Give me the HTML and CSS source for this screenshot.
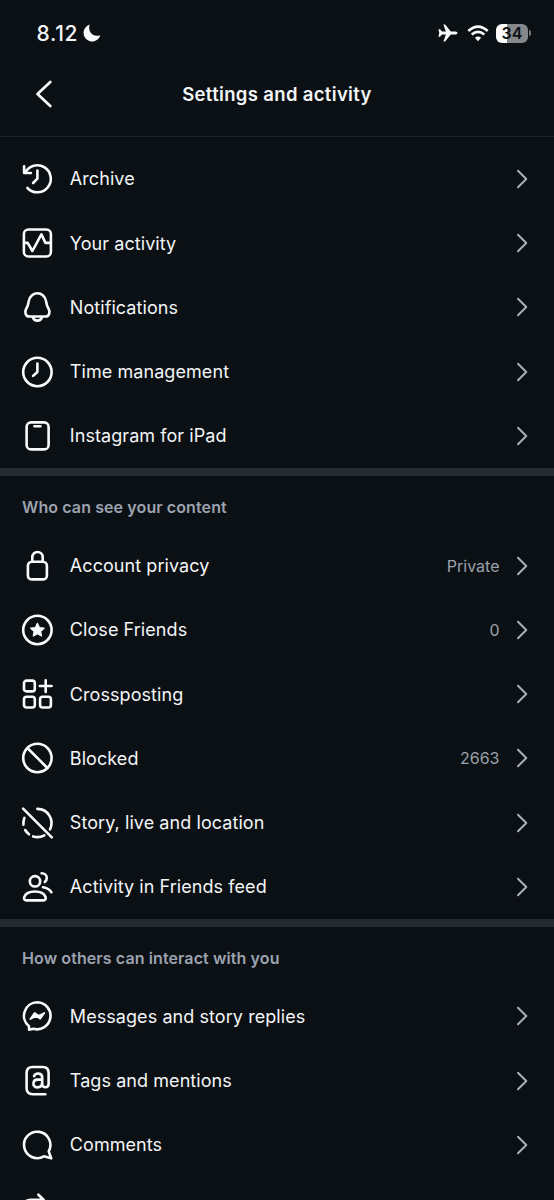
FILE: index.html
```html
<!DOCTYPE html>
<html lang="en">
<head>
<meta charset="utf-8">
<title>Settings and activity</title>
<link rel="stylesheet" href="styles.css">
</head>
<body>
<svg class="defs" aria-hidden="true"><symbol id="chev" viewBox="0 0 12 20"><path d="M2 1.8 10.3 10 2 18.2"/></symbol></svg>
<div class="screen">
  <div class="status">
    <span class="time">8.12</span>
    <svg class="moon" viewBox="0 0 18 18"><path d="M6.7.6A8.6 8.6 0 1 0 17.4 11.2C11 13.8 4.2 8.5 6.7.6Z"/></svg>
    <span class="spacer"></span>
    <svg class="plane" viewBox="0 0 20 18"><path d="M19.6 9c0-.9-1.4-1.5-2.6-1.5h-4.2L7.5.9C7.2.5 6.9.4 6.5.4H5.4l2.500 7.100H4L2 5.200H.4L1.300 9 .4 12.800H2l2-2.300h3.900L5.400 17.600h1.100c.4 0 .7-.1 1-.5l5.300-6.600H17c1.200 0 2.600-.6 2.600-1.500Z"/></svg>
    <svg class="wifi" viewBox="0 0 22 17"><path d="M1.300 5.900Q11-2.700 20.700 5.900M4.700 9.600Q11 4.200 17.300 9.600"/><path class="solid" d="M7.900 12.700Q11 10.200 14.100 12.700L11 16.200Z"/></svg>
    <div class="battery"><span class="level">34</span></div><i class="cap"></i>
  </div>
  <header class="header">
    <svg class="back" viewBox="0 0 18 28"><path d="M15.300 2 2.500 14l12.800 12"/></svg>
    <h1>Settings and activity</h1>
  </header>
  <main>
    <section class="group first">
      <div class="row"><svg class="icon" viewBox="0 0 32 32"><path d="M6 25A13.500 13.500 0 1 0 3.700 10M2.700 3.200V10H9.500M16 7.500V15.700L11.700 20"/></svg><span class="label">Archive</span><svg class="chev"><use href="#chev"/></svg></div>
      <div class="row"><svg class="icon" viewBox="0 0 32 32"><rect x="2.500" y="2.500" width="27" height="27" rx="4.500"/><path d="M2.600 15.900H6.300L11 24 20 7.300 24 15.900H29.300"/></svg><span class="label">Your activity</span><svg class="chev"><use href="#chev"/></svg></div>
      <div class="row"><svg class="icon" viewBox="0 0 32 32"><path d="M16 2.300C12 2.300 7.900 5.200 7.300 10.300C6.900 13.800 6.400 15.300 4.700 18C3.400 20.200 3.500 25.500 8 25.500H24C28.500 25.500 28.600 20.200 27.300 18C25.600 15.300 25.100 13.800 24.700 10.300C24.100 5.200 20 2.300 16 2.300ZM11.600 26.500Q12.600 29.600 16 29.600T20.400 26.500"/></svg><span class="label">Notifications</span><svg class="chev"><use href="#chev"/></svg></div>
      <div class="row"><svg class="icon" viewBox="0 0 32 32"><circle cx="16" cy="16" r="14.200"/><path d="M16 7.500V16L11.700 19.900"/></svg><span class="label">Time management</span><svg class="chev"><use href="#chev"/></svg></div>
      <div class="row"><svg class="icon" viewBox="0 0 32 32"><rect x="5.200" y="2.400" width="22" height="27" rx="4.500"/><path d="M13.100 6.300H19"/></svg><span class="label">Instagram for iPad</span><svg class="chev"><use href="#chev"/></svg></div>
    </section>
    <section class="group">
      <h2>Who can see your content</h2>
      <div class="row"><svg class="icon" viewBox="0 0 32 32"><rect x="6.500" y="11.800" width="19" height="17.600" rx="4"/><path d="M10.900 11.500V7.200A5.200 5.200 0 0 1 21.300 7.200V11.500"/></svg><span class="label">Account privacy</span><span class="value">Private</span><svg class="chev"><use href="#chev"/></svg></div>
      <div class="row"><svg class="icon" viewBox="0 0 32 32"><circle cx="16" cy="16" r="14.200"/><path class="fill" d="M16 9.300 18 13.600 22.700 14.200 19.300 17.300 20.100 22 16 19.700 11.900 22 12.700 17.300 9.300 14.200 14 13.600Z"/></svg><span class="label">Close Friends</span><span class="value">0</span><svg class="chev"><use href="#chev"/></svg></div>
      <div class="row"><svg class="icon" viewBox="0 0 32 32"><rect x="2.600" y="2.600" width="10.800" height="10.800" rx="2.500"/><rect x="2.600" y="18.700" width="10.800" height="10.800" rx="2.500"/><rect x="18.700" y="18.700" width="10.800" height="10.800" rx="2.500"/><path d="M24.300 2.200V14M18.400 8H30.200"/></svg><span class="label">Crossposting</span><svg class="chev"><use href="#chev"/></svg></div>
      <div class="row"><svg class="icon" viewBox="0 0 32 32"><circle cx="16" cy="16" r="14.200"/><path d="M6 6 26 26"/></svg><span class="label">Blocked</span><span class="value">2663</span><svg class="chev"><use href="#chev"/></svg></div>
      <div class="row"><svg class="icon" viewBox="0 0 32 32"><path d="M1.700 1.700 30.400 30.400M16 1.900A14.100 14.100 0 0 1 28.600 22.300M22.900 28.300A14.100 14.100 0 0 1 11.700 29.400M7.600 27.300A14.100 14.100 0 0 1 3.800 23M2 17.600A14.100 14.100 0 0 1 3 10.900"/></svg><span class="label">Story, live and location</span><svg class="chev"><use href="#chev"/></svg></div>
      <div class="row"><svg class="icon" viewBox="0 0 32 32"><circle cx="13.600" cy="10.300" r="5.200"/><path d="M13.500 20.500C8.500 20.500 4.300 22.300 2.900 26C2.200 28 3 29.400 5 29.400H22C24 29.400 24.800 28 24.100 26C22.700 22.300 18.500 20.500 13.500 20.500ZM20.200 2.300C23.500 2.300 25.400 4.600 25.400 7Q25.400 9.300 23.400 11M21.600 16.300Q27.500 17.300 30 21.200"/></svg><span class="label">Activity in Friends feed</span><svg class="chev"><use href="#chev"/></svg></div>
    </section>
    <section class="group">
      <h2>How others can interact with you</h2>
      <div class="row"><svg class="icon" viewBox="0 0 32 32"><path d="M16 2.300A13.500 13.500 0 1 1 12 28.800L7.700 29.700 7.600 26.300A13.500 13.500 0 0 1 16 2.300Z"/><path class="bolt" d="M9 19 13.200 13 17.300 15.700 22.900 13 18.800 18.700 14.800 16Z"/></svg><span class="label">Messages and story replies</span><svg class="chev"><use href="#chev"/></svg></div>
      <div class="row"><svg class="icon" viewBox="0 0 32 32"><path d="M24 29.200H11.200Q5.200 29.200 5.200 23.200V8Q5.200 2 11.200 2H21.200Q27.200 2 27.200 8V19C27.200 23.300 20.800 23.300 20.800 19.300V12.500C20.800 7.400 13.800 7.600 12.700 11.200M20.800 14.600H16.300C10.700 14.600 10.700 22.400 15.700 22.400C19 22.400 20.800 20.400 20.800 17.500"/></svg><span class="label">Tags and mentions</span><svg class="chev"><use href="#chev"/></svg></div>
      <div class="row"><svg class="icon" viewBox="0 0 32 32"><path d="M27.300 22.400A13.200 13.200 0 1 0 22.500 27.300L29.800 29.300Z"/></svg><span class="label">Comments</span><svg class="chev"><use href="#chev"/></svg></div>
      <div class="row"><svg class="icon" viewBox="0 0 32 32"><path d="M17 1.700 22.200 6.800 17 12M22 6.800H9Q2.500 7 2.500 14V18"/></svg></div>
    </section>
  </main>
</div>
</body>
</html>
```
FILE: styles.css
```css
* { box-sizing: border-box; }
body { margin: 0; background: #0b1014; color: #f3f5f7; font-family: Inter, "Liberation Sans", sans-serif; }
svg { display: block; flex: none; overflow: visible; fill: none; stroke: #f8fafb; stroke-linecap: round; stroke-linejoin: round; }
.defs { position: absolute; width: 0; height: 0; }
.screen { height: 1200px; overflow: hidden; }
.status { display: flex; align-items: center; height: 66px; padding: 0 23px 0 36.5px; }
.time { padding-top: 1px; font-size: 21px; font-weight: 500; line-height: 26px; letter-spacing: 0.7px; }
.moon { width: 18px; height: 18px; margin-left: 5px; fill: #f8fafb; stroke: none; }
.spacer { flex: 1; }
.plane { width: 20px; height: 18px; fill: #f8fafb; stroke: none; }
.wifi { width: 22px; height: 17px; margin: 0 7px 0 9px; stroke-width: 2.7; stroke-linecap: butt; }
.wifi .solid { fill: #f8fafb; stroke: none; }
.battery { width: 32px; height: 19px; border-radius: 6px; background: linear-gradient(90deg, #fff 11px, #85888b 11px); color: #0b1014; text-align: center; }
.level { display: block; font-size: 16px; font-weight: 600; line-height: 19px; }
.cap { width: 2px; height: 6px; margin-left: 1px; border-radius: 0 3px 3px 0; background: #75787b; }
.header { display: grid; grid-template-columns: 60px 1fr 60px; align-items: center; height: 71px; padding-bottom: 15px; border-bottom: 1px solid #1c2126; }
.back { width: 18px; height: 28px; margin-left: 35px; stroke-width: 2.7; }
h1 { margin: 0; text-align: center; font-size: 18.5px; font-weight: 600; line-height: 24px; letter-spacing: 0.34px; }
.group { border-top: 8px solid #252a2e; }
.first { padding-top: 9.75px; border-top: 0; }
h2 { margin: 0; height: 57.4px; padding: 19px 22px 0; color: #9ca3b0; font-size: 16px; font-weight: 600; line-height: 24px; letter-spacing: 0.1px; }
.row { display: flex; align-items: center; height: 64.25px; padding: 0 26px 0 21px; }
.icon { width: 32px; height: 32px; stroke-width: 2.6; transform: translateX(0.4px); }
.icon .fill { fill: #f8fafb; stroke-width: 1.2; }
.icon .bolt { fill: #f8fafb; stroke-width: 1.8; }
.label { flex: 1; margin-left: 16.8px; padding-top: 1px; font-size: 18px; line-height: 24px; letter-spacing: 0.07px; }
.value { margin-right: 16.5px; color: #9ca2aa; font-size: 16px; line-height: 24px; }
.chev { width: 12px; height: 20px; stroke: #a9afb5; stroke-width: 2; }
```
